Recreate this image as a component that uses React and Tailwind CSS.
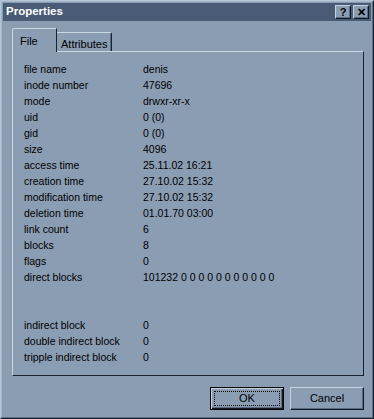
// Boîte de dialogue Propriétés (style Windows classique, thème bleu-gris)
import React from 'react';

const ROWS = [
  ['file name', 'denis'],
  ['inode number', '47696'],
  ['mode', 'drwxr-xr-x'],
  ['uid', '0 (0)'],
  ['gid', '0 (0)'],
  ['size', '4096'],
  ['access time', '25.11.02 16:21'],
  ['creation time', '27.10.02 15:32'],
  ['modification time', '27.10.02 15:32'],
  ['deletion time', '01.01.70 03:00'],
  ['link count', '6'],
  ['blocks', '8'],
  ['flags', '0'],
  ['direct blocks', '101232 0 0 0 0 0 0 0 0 0 0 0'],
];

const INDIRECT = [
  ['indirect block', '0'],
  ['double indirect block', '0'],
  ['tripple indirect block', '0'],
];

function Row({ label, value }) {
  return (
    <div className="flex h-[16px] items-center">
      <span className="w-[119px] shrink-0">{label}</span>
      <span>{value}</span>
    </div>
  );
}

function TitleButton({ children }) {
  return (
    <div className="flex h-[14px] w-[16px] items-center justify-center border-t border-l border-[#c4d3e2] border-r border-b border-r-[#111826] border-b-[#111826] bg-[#8a9db3] shadow-[inset_-1px_-1px_0_#5a6b82] text-[11px] font-bold leading-none text-black">
      {children}
    </div>
  );
}

export default function App() {
  return (
    <div
      className="h-[419px] w-[374px] bg-[#8a9db3] text-black"
      style={{ fontFamily: '"Liberation Sans", Arial, sans-serif' }}
    >
      <div className="flex h-full w-full flex-col border-t border-l border-[#b4c5d8] border-r border-b border-r-[#1a2230] border-b-[#1a2230]">
        <div className="flex h-full w-full flex-col border-t border-l border-[#a5b7cb] border-r border-b border-r-[#5d6e85] border-b-[#5d6e85] p-px">
          {/* Barre de titre */}
          <div className="flex h-[18px] items-center justify-between bg-[#4a5b76] pl-[3px] pr-[2px]">
            <span className="text-[11.5px] font-bold text-white">Properties</span>
            <div className="flex items-center gap-[2px]">
              <TitleButton>?</TitleButton>
              <TitleButton>✕</TitleButton>
            </div>
          </div>

          {/* Onglets */}
          <div className="ml-[9px] mt-[7px] flex w-[352px] flex-col text-[10.5px]">
            <div className="relative z-10 flex items-end">
              <div className="-mb-px flex h-[24px] w-[45px] items-start rounded-tl-[2px] border-t border-l border-[#c9d7e5] border-r border-r-[#1a2230] bg-[#8a9db3] pl-[7px] pt-[4px] text-[11px]">
                File
              </div>
              <div className="flex h-[19px] w-[55px] items-start rounded-tr-[2px] border-t border-[#c9d7e5] border-r border-r-[#1a2230] bg-[#8a9db3] pl-[4px] pt-[3px] text-[11px] shadow-[inset_-1px_0_0_#5a6b82]">
                Attributes
              </div>
            </div>

            {/* Panneau */}
            <div className="h-[325px] border-t border-l border-[#c9d7e5] border-r border-b border-r-[#1a2230] border-b-[#1a2230] pl-[11px] pt-[10px]">
              {ROWS.map(([l, v]) => (
                <Row key={l} label={l} value={v} />
              ))}
              <div className="h-[32px]" />
              {INDIRECT.map(([l, v]) => (
                <Row key={l} label={l} value={v} />
              ))}
            </div>
          </div>

          {/* Boutons */}
          <div className="ml-[9px] mt-[11px] flex w-[352px] justify-end gap-[6px] text-[11px]">
            <div className="flex h-[23px] w-[74px] items-center justify-center border border-black bg-[#8a9db3] shadow-[inset_1px_1px_0_#c4d3e2,inset_-1px_-1px_0_#111826,inset_-2px_-2px_0_#5a6b82] p-[3px]">
              <div className="flex h-full w-full items-center justify-center border border-dotted border-black">
                OK
              </div>
            </div>
            <div className="flex h-[23px] w-[74px] items-center justify-center border-t border-l border-[#c4d3e2] border-r border-b border-r-[#111826] border-b-[#111826] bg-[#8a9db3] shadow-[inset_-1px_-1px_0_#5a6b82]">
              Cancel
            </div>
          </div>
        </div>
      </div>
    </div>
  );
}
